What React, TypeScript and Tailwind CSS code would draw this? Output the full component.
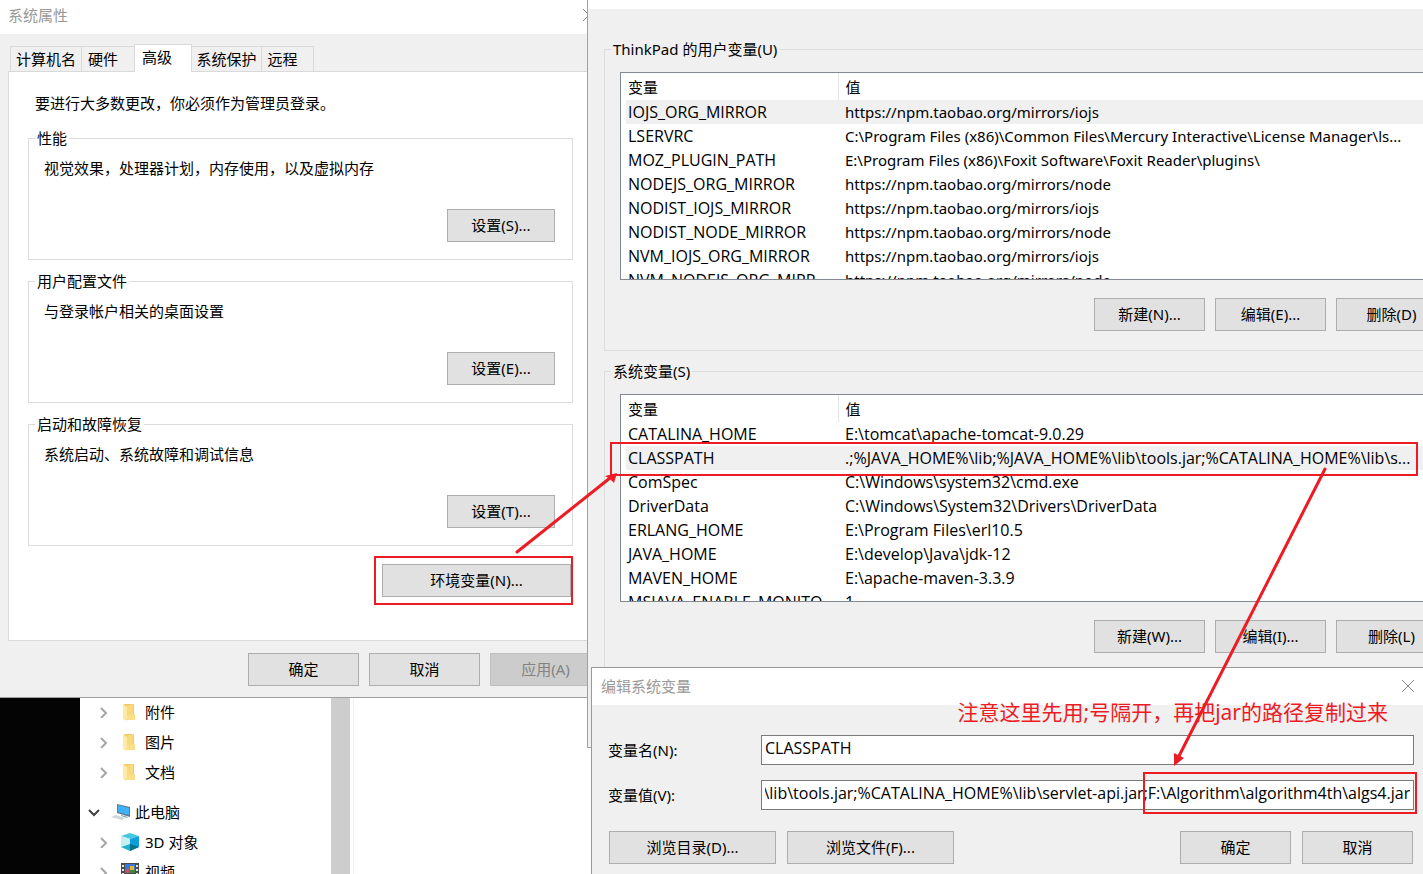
import React, { useEffect, useRef } from 'react';

type Variable = { name: string; value: string };

const userVariables: Variable[] = [
  { name: 'IOJS_ORG_MIRROR', value: 'https://npm.taobao.org/mirrors/iojs' },
  { name: 'LSERVRC', value: 'C:\\Program Files (x86)\\Common Files\\Mercury Interactive\\License Manager\\ls...' },
  { name: 'MOZ_PLUGIN_PATH', value: 'E:\\Program Files (x86)\\Foxit Software\\Foxit Reader\\plugins\\' },
  { name: 'NODEJS_ORG_MIRROR', value: 'https://npm.taobao.org/mirrors/node' },
  { name: 'NODIST_IOJS_MIRROR', value: 'https://npm.taobao.org/mirrors/iojs' },
  { name: 'NODIST_NODE_MIRROR', value: 'https://npm.taobao.org/mirrors/node' },
  { name: 'NVM_IOJS_ORG_MIRROR', value: 'https://npm.taobao.org/mirrors/iojs' },
  { name: 'NVM_NODEJS_ORG_MIRR', value: 'https://npm.taobao.org/mirrors/node' },
];

const systemVariables: Variable[] = [
  { name: 'CATALINA_HOME', value: 'E:\\tomcat\\apache-tomcat-9.0.29' },
  { name: 'CLASSPATH', value: '.;%JAVA_HOME%\\lib;%JAVA_HOME%\\lib\\tools.jar;%CATALINA_HOME%\\lib\\s...' },
  { name: 'ComSpec', value: 'C:\\Windows\\system32\\cmd.exe' },
  { name: 'DriverData', value: 'C:\\Windows\\System32\\Drivers\\DriverData' },
  { name: 'ERLANG_HOME', value: 'E:\\Program Files\\erl10.5' },
  { name: 'JAVA_HOME', value: 'E:\\develop\\Java\\jdk-12' },
  { name: 'MAVEN_HOME', value: 'E:\\apache-maven-3.3.9' },
  { name: 'MSJAVA_ENABLE_MONITO', value: '1' },
];

const settingGroups = [
  { title: '性能', text: '视觉效果，处理器计划，内存使用，以及虚拟内存', button: '设置(S)...' },
  { title: '用户配置文件', text: '与登录帐户相关的桌面设置', button: '设置(E)...' },
  { title: '启动和故障恢复', text: '系统启动、系统故障和调试信息', button: '设置(T)...' },
];

const classpath =
  '.;%JAVA_HOME%\\lib;%JAVA_HOME%\\lib\\tools.jar;%CATALINA_HOME%\\lib\\servlet-api.jar;F:\\Algorithm\\algorithm4th\\algs4.jar';

function Button({ children, width = 'w-[111px]', disabled = false }: { children: React.ReactNode; width?: string; disabled?: boolean }) {
  return (
    <button
      disabled={disabled}
      className={`h-[33px] shrink-0 border pb-[2px] ${width} ${
        disabled ? 'border-[#bfbfbf] bg-[#cccccc] text-[#838383]' : 'border-[#adadad] bg-[#e1e1e1] text-black'
      }`}
    >
      {children}
    </button>
  );
}

function CloseIcon() {
  return (
    <svg className="h-3 w-3" viewBox="0 0 12 12" fill="none" stroke="#8a8a8a">
      <path d="M0 0l12 12M12 0L0 12" />
    </svg>
  );
}

function SystemProperties() {
  return (
    <section className="w-[609px] border-b border-[#a0a0a0] bg-[#f0f0f0]">
      <header className="flex h-[34px] items-center justify-between bg-white pr-[14px] pb-1 pl-2 text-[#999999]">
        <h2>系统属性</h2>
        <button aria-label="关闭">
          <CloseIcon />
        </button>
      </header>

      <div className="px-2 pt-[10px]">
        <div role="tablist" className="-mb-px flex items-end pl-[2px]">
          <button role="tab" className="h-[26px] w-[71px] border border-r-0 border-[#d9d9d9]">计算机名</button>
          <button role="tab" className="h-[26px] w-[53px] border border-r-0 border-[#d9d9d9] pr-[10px]">硬件</button>
          <button role="tab" aria-selected="true" className="h-7 w-[58px] border border-b-0 border-[#d9d9d9] bg-white pr-3 pb-1">
            高级
          </button>
          <button role="tab" className="h-[26px] w-[70px] border border-l-0 border-[#d9d9d9]">系统保护</button>
          <button role="tab" className="h-[26px] w-[52px] border border-l-0 border-[#d9d9d9] pr-[10px]">远程</button>
        </div>

        <div role="tabpanel" className="h-[570px] border border-[#d9d9d9] bg-white pt-[21px] pr-[27px] pl-[19px]">
          <p className="pl-[7px]">要进行大多数更改，你必须作为管理员登录。</p>

          <div className="mt-[15px] flex flex-col gap-[11px]">
            {settingGroups.map((group) => (
              <fieldset key={group.title} className="border border-[#dcdcdc] pr-[17px] pb-[17px] pl-[15px]">
                <legend className="-ml-[9px] px-[2px]">{group.title}</legend>
                <p className="pt-[10px]">{group.text}</p>
                <div className="mt-[31px] flex justify-end">
                  <Button width="w-[108px]">{group.button}</Button>
                </div>
              </fieldset>
            ))}
          </div>

          <div className="mt-[10px] ml-auto w-[199px] border-2 border-[#ed1c24] py-[6px] pl-[6px]">
            <Button width="w-full">环境变量(N)...</Button>
          </div>
        </div>

        <footer className="flex justify-end gap-[10px] pt-3 pb-[11px]">
          <Button>确定</Button>
          <Button>取消</Button>
          <Button disabled>应用(A)</Button>
        </footer>
      </div>
    </section>
  );
}

function Chevron() {
  return (
    <svg className="h-3 w-3" viewBox="0 0 12 12" fill="none" stroke="#a6a6a6" strokeWidth={2}>
      <path d="M3 2l5 5-5 5" />
    </svg>
  );
}

function FolderIcon() {
  return (
    <svg className="h-[18px] w-[18px]" viewBox="0 0 18 18">
      <path d="M3 1h10v10l1 1v5H3z" fill="#f3cb66" />
      <path d="M6 3l6-2v10l-6 5z" fill="#f9d97c" />
      <path d="M12 11l2 1v5H6v-4z" fill="#fbdf88" />
      <path d="M2 1l4 3v11l-1 3-3-2z" fill="#ffe9a6" />
    </svg>
  );
}

function ComputerIcon() {
  return (
    <svg className="h-[18px] w-5" viewBox="0 0 20 18">
      <path d="M6 1l13 3v10L6 10z" fill="#5b7a92" />
      <path d="M7 2l11 3v7L7 9z" fill="#41b1fb" />
      <path d="M10 12l4 1 3 1-1 1-6-2z" fill="#8fa3b3" />
      <path d="M0 14l5-2 9 3-3 2z" fill="#cfd6de" />
    </svg>
  );
}

function CubeIcon() {
  return (
    <svg className="h-[18px] w-[18px]" viewBox="0 0 18 18">
      <path d="M0 3l9-3 9 3-9 3z" fill="#43c9de" />
      <path d="M0 3l9 3v12l-9-4z" fill="#c5f0f2" />
      <path d="M18 3L9 6v12l9-4z" fill="#0d9fdc" />
      <path d="M0 14l9-3v7z" fill="#1fb3c9" />
      <path d="M18 14l-9-3v7z" fill="#07718f" />
    </svg>
  );
}

function VideoIcon() {
  return (
    <svg className="h-[18px] w-[18px]" viewBox="0 0 18 18">
      <path d="M0 0h18v18H0z" fill="#4a4a4a" />
      <path d="M1 2h2v2H1zM1 6h2v2H1zM1 10h2v2H1zM1 14h2v2H1zM15 2h2v2h-2zM15 6h2v2h-2zM15 10h2v2h-2zM15 14h2v2h-2z" fill="#e8e8e8" />
      <path d="M4 1h10v9H4z" fill="#3c78dc" />
      <path d="M4 6h6v4H4z" fill="#c0507a" />
      <path d="M9 3h4v4H9z" fill="#e8b422" />
      <path d="M8 7h6v3H8z" fill="#3f8a3a" />
      <path d="M4 12h10v6H4z" fill="#4f86d8" />
    </svg>
  );
}

function Explorer() {
  return (
    <section className="flex min-h-0 flex-1 overflow-hidden bg-white">
      <div className="w-20 bg-[#040404]" />
      <ul className="-mt-px w-[251px] shrink-0">
        {['附件', '图片', '文档'].map((name) => (
          <li key={name} className="flex h-[30px] items-center pl-[18px]">
            <Chevron />
            <span className="ml-[11px]">
              <FolderIcon />
            </span>
            <span className="ml-[6px]">{name}</span>
          </li>
        ))}
        <li className="mt-[10px] flex h-[30px] items-center pl-2">
          <svg className="h-3 w-3" viewBox="0 0 12 12" fill="none" stroke="#404040" strokeWidth={2}>
            <path d="M1 4l5 5 5-5" />
          </svg>
          <span className="ml-[11px]">
            <ComputerIcon />
          </span>
          <span className="ml-1">此电脑</span>
        </li>
        <li className="flex h-[30px] items-center pl-[18px]">
          <Chevron />
          <span className="ml-[11px]">
            <CubeIcon />
          </span>
          <span className="ml-[6px]">3D 对象</span>
        </li>
        <li className="flex h-[30px] items-center pl-[18px]">
          <Chevron />
          <span className="ml-[11px]">
            <VideoIcon />
          </span>
          <span className="ml-[6px]">视频</span>
        </li>
      </ul>
      <div className="w-[19px] bg-[#cdcdcd]" />
      <div className="w-1 border-r border-[#f0f0f0]" />
    </section>
  );
}

type VariableGroupProps = {
  title: string;
  variables: Variable[];
  selected: string;
  buttons: string[];
  valueClass: string;
};

function VariableGroup({ title, variables, selected, buttons, valueClass }: VariableGroupProps) {
  return (
    <fieldset className="border border-[#dcdcdc] px-[15px] pb-[19px]">
      <legend className="-ml-[9px] px-[2px]">{title}</legend>
      <div className="mt-[13px] h-[208px] overflow-hidden border border-[#828790] bg-white pl-[5px]">
        <table className="w-full table-fixed text-left whitespace-nowrap">
          <colgroup>
            <col className="w-[212px]" />
            <col />
          </colgroup>
          <thead>
            <tr className="h-[27px]">
              <th className="border-r border-[#e5e5e5] p-0 pl-[2px] font-normal">变量</th>
              <th className="p-0 pl-[7px] font-normal">值</th>
            </tr>
          </thead>
          <tbody>
            {variables.map((variable) => (
              <tr key={variable.name} className={variable.name === selected ? 'h-6 bg-[#f0f0f0]' : 'h-6'}>
                <td className="overflow-hidden p-0 pl-[2px] font-['Open_Sans',sans-serif] text-[16px] leading-5">{variable.name}</td>
                <td className={`p-0 pl-[7px] ${valueClass}`}>{variable.value}</td>
              </tr>
            ))}
          </tbody>
        </table>
      </div>
      <div className="mt-[18px] flex justify-end gap-[10px]">
        {buttons.map((label) => (
          <Button key={label}>{label}</Button>
        ))}
      </div>
    </fieldset>
  );
}

function EnvironmentVariables() {
  return (
    <section className="-mr-14 h-[748px] border-b border-l border-[#a0a0a0] bg-[#f0f0f0]">
      <div className="h-[9px] bg-white" />
      <div className="flex flex-col gap-[10px] px-4 pt-[30px]">
        <VariableGroup
          title="ThinkPad 的用户变量(U)"
          variables={userVariables}
          selected="IOJS_ORG_MIRROR"
          buttons={['新建(N)...', '编辑(E)...', '删除(D)']}
          valueClass="text-[15px] leading-5"
        />
        <VariableGroup
          title="系统变量(S)"
          variables={systemVariables}
          selected="CLASSPATH"
          buttons={['新建(W)...', '编辑(I)...', '删除(L)']}
          valueClass="font-['Open_Sans',sans-serif] text-[16px] leading-5"
        />
      </div>
    </section>
  );
}

function EditVariable() {
  const valueRef = useRef<HTMLInputElement>(null);

  // keep the end of the long value in view
  useEffect(() => {
    if (valueRef.current) {
      valueRef.current.scrollLeft = valueRef.current.scrollWidth;
    }
  }, []);

  const inputClass =
    "h-[30px] min-w-0 flex-1 border border-[#7a7a7a] bg-white px-[3px] pb-1 font-['Open_Sans',sans-serif] text-[16px] leading-5";

  return (
    <section className="absolute top-[667px] right-0 bottom-0 left-1 border-t border-l border-[#999999] bg-[#f0f0f0]">
      <header className="flex h-[37px] items-center justify-between bg-white pr-[9px] pb-[2px] pl-[9px] text-[#999999]">
        <h2>编辑系统变量</h2>
        <button aria-label="关闭">
          <CloseIcon />
        </button>
      </header>
      <div className="flex flex-col gap-[15px] pt-[30px] pr-[9px] pl-4">
        <div className="flex items-center">
          <label htmlFor="variable-name" className="w-[153px] shrink-0">变量名(N):</label>
          <input id="variable-name" defaultValue="CLASSPATH" className={inputClass} />
        </div>
        <div className="flex items-center">
          <label htmlFor="variable-value" className="w-[153px] shrink-0">变量值(V):</label>
          <input id="variable-value" ref={valueRef} defaultValue={classpath} className={inputClass} />
        </div>
      </div>
      <div className="flex gap-[11px] pt-[21px] pr-[10px] pl-[17px]">
        <Button width="w-[167px]">浏览目录(D)...</Button>
        <Button width="w-[167px]">浏览文件(F)...</Button>
        <div className="flex-1" />
        <Button>确定</Button>
        <Button>取消</Button>
      </div>
    </section>
  );
}

// red marks drawn over the windows
function Annotations() {
  return (
    <div className="pointer-events-none absolute inset-0 text-[#ed1c24]">
      <div className="absolute top-[442px] right-[5px] left-[610px] h-[34px] border-2 border-current" />
      <div className="absolute top-[772px] right-[6px] h-[42px] w-[274px] border-2 border-current" />
      <p className="absolute top-[697px] right-[35px] text-[21px] leading-[30px] whitespace-nowrap">
        注意这里先用;号隔开，再把jar的路径复制过来
      </p>
      <svg className="absolute top-[470px] left-[514px] h-[84px] w-[104px]" viewBox="0 0 104 84">
        <path d="M3 82L96 8" fill="none" stroke="currentColor" strokeWidth={3} strokeLinecap="round" />
        <path d="M103 3L100 13L96 9L91 6z" fill="currentColor" />
      </svg>
      <svg className="absolute top-[466px] right-[96px] h-[302px] w-[154px]" viewBox="0 0 154 302">
        <path d="M152 3L6 290" fill="none" stroke="currentColor" strokeWidth={3} strokeLinecap="round" />
        <path d="M1 300V287L5 289L11 292z" fill="currentColor" />
      </svg>
    </div>
  );
}

export default function App() {
  return (
    <main className="relative flex h-screen overflow-hidden bg-white font-['Noto_Sans','Noto_Sans_CJK_SC',sans-serif] text-[15px] leading-5 text-black">
      <div className="flex w-[587px] shrink-0 flex-col overflow-hidden">
        <SystemProperties />
        <Explorer />
      </div>
      <div className="relative min-w-0 flex-1">
        <EnvironmentVariables />
        <EditVariable />
      </div>
      <Annotations />
    </main>
  );
}
